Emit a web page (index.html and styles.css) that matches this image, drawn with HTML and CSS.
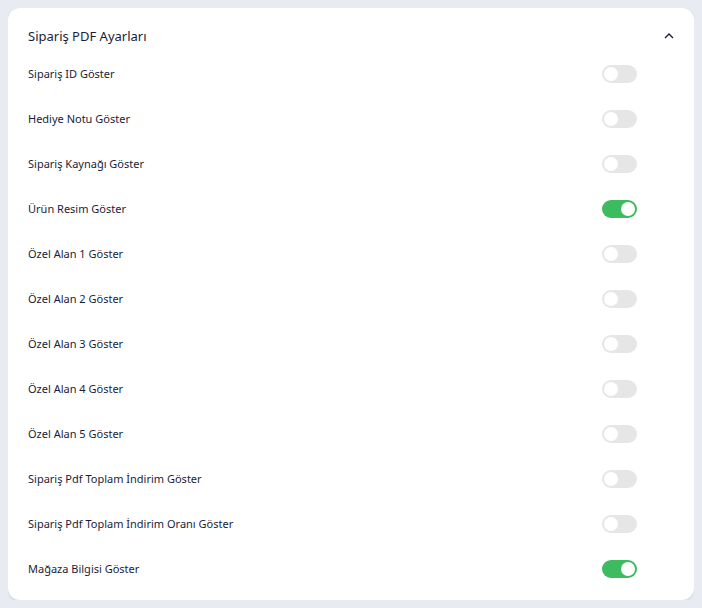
FILE: index.html
```html
<!DOCTYPE html>
<html>
<head>
	<title>Sipariş PDF Ayarları</title>
	<link rel="stylesheet" href="styles.css">
</head>
<body>
	<div class="card">
		<div class="card-header">
			<h2>Sipariş PDF Ayarları</h2>
			<svg class="chevron" width="10" height="6" viewBox="0 0 10 6"><path d="M1 5L5 1L9 5" fill="none" stroke="#1c1f33" stroke-width="1.4"/></svg>
		</div>
		<div class="setting"><span>Sipariş ID Göster</span><label class="switch"><input type="checkbox"><span class="slider"></span></label></div>
		<div class="setting"><span>Hediye Notu Göster</span><label class="switch"><input type="checkbox"><span class="slider"></span></label></div>
		<div class="setting"><span>Sipariş Kaynağı Göster</span><label class="switch"><input type="checkbox"><span class="slider"></span></label></div>
		<div class="setting"><span>Ürün Resim Göster</span><label class="switch"><input type="checkbox" checked><span class="slider"></span></label></div>
		<div class="setting"><span>Özel Alan 1 Göster</span><label class="switch"><input type="checkbox"><span class="slider"></span></label></div>
		<div class="setting"><span>Özel Alan 2 Göster</span><label class="switch"><input type="checkbox"><span class="slider"></span></label></div>
		<div class="setting"><span>Özel Alan 3 Göster</span><label class="switch"><input type="checkbox"><span class="slider"></span></label></div>
		<div class="setting"><span>Özel Alan 4 Göster</span><label class="switch"><input type="checkbox"><span class="slider"></span></label></div>
		<div class="setting"><span>Özel Alan 5 Göster</span><label class="switch"><input type="checkbox"><span class="slider"></span></label></div>
		<div class="setting"><span>Sipariş Pdf Toplam İndirim Göster</span><label class="switch"><input type="checkbox"><span class="slider"></span></label></div>
		<div class="setting"><span>Sipariş Pdf Toplam İndirim Oranı Göster</span><label class="switch"><input type="checkbox"><span class="slider"></span></label></div>
		<div class="setting"><span>Mağaza Bilgisi Göster</span><label class="switch"><input type="checkbox" checked><span class="slider"></span></label></div>
	</div>
</body>
</html>
```

FILE: styles.css
```css
body {
	margin: 8px;
	background-color: #e9ebf3;
	font-family: "Noto Sans", sans-serif;
	color: #1a1d38;
}
.card {
	background-color: #fff;
	border-radius: 12px;
	box-shadow: 0 1px 3px rgba(0,0,0,0.12);
	padding: 16px 57px 16px 20px;
	height: 592px;
	box-sizing: border-box;
}
.card-header {
	display: flex;
	align-items: center;
	justify-content: space-between;
	height: 24px;
	margin-right: -38px;
	margin-bottom: 3px;
}
.card-header h2 {
	margin: 0;
	font-size: 13px;
	font-weight: 400;
}
.chevron {
	margin-right: 1px;
}
.setting {
	display: flex;
	align-items: center;
	justify-content: space-between;
	height: 45px;
	font-size: 11px;
	font-weight: 400;
}
.switch {
	position: relative;
	display: inline-block;
	width: 35px;
	height: 18px;
}
.switch input {
	display: none;
}
.slider {
	position: absolute;
	inset: 0;
	background-color: #e6e6e6;
	border-radius: 9px;
}
.slider:before {
	content: "";
	position: absolute;
	left: 2px;
	top: 2px;
	width: 14px;
	height: 14px;
	border-radius: 50%;
	background-color: #fff;
}
.switch input:checked + .slider {
	background-color: #3dbb5f;
}
.switch input:checked + .slider:before {
	left: 19px;
}
```
